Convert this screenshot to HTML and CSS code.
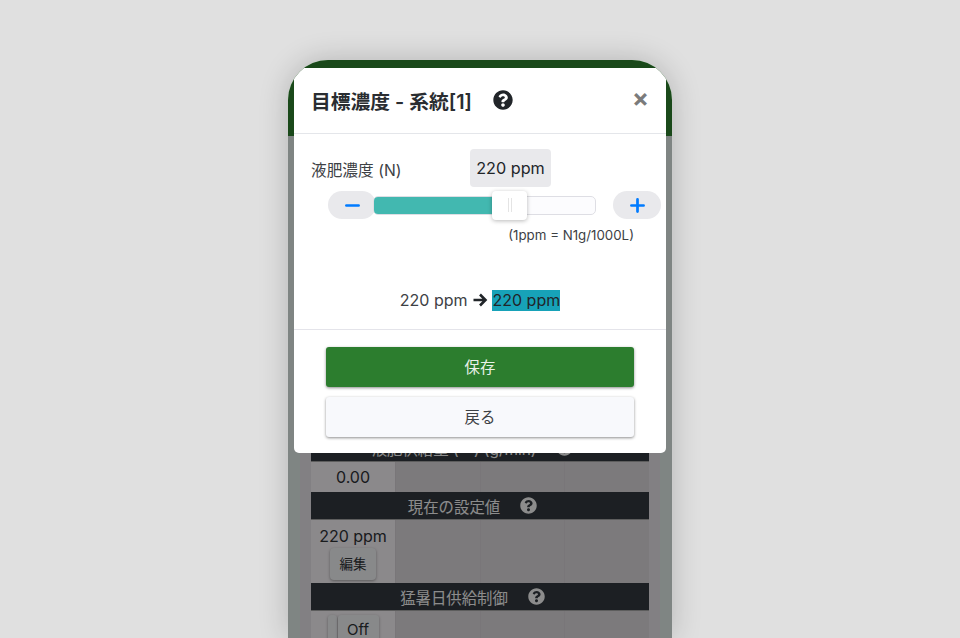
FILE: index.html
```html
<!DOCTYPE html>
<html lang="ja">
<head>
<meta charset="utf-8">
<title>目標濃度</title>
<link rel="stylesheet" href="styles.css">
</head>
<body>
<div class="phone">
  <header class="appbar"></header>
  <main class="content">
    <div class="table">
      <div class="band">液肥供給量 (ー) (g/min)<svg class="help" viewBox="0 0 512 512"><use href="#q"/></svg></div>
      <div class="row row-short"><div class="cell first">0.00</div><div class="cell"></div><div class="cell"></div><div class="cell"></div></div>
      <div class="band">現在の設定値<svg class="help" viewBox="0 0 512 512"><use href="#q"/></svg></div>
      <div class="row row-tall"><div class="cell first">220 ppm<span class="edit">編集</span></div><div class="cell"></div><div class="cell"></div><div class="cell"></div></div>
      <div class="band">猛暑日供給制御<svg class="help" viewBox="0 0 512 512"><use href="#q"/></svg></div>
      <div class="row"><div class="cell first"><span class="toggle"><i></i><b>Off</b></span></div><div class="cell"></div><div class="cell"></div><div class="cell"></div></div>
    </div>
  </main>
  <div class="scrim"></div>
  <section class="modal">
    <div class="modal-head">
      <h1>目標濃度 - 系統[1]</h1>
      <svg class="head-help" viewBox="0 0 512 512"><path id="q" fill="currentColor" d="M504 256c0 137-111 248-248 248S8 393 8 256 119 8 256 8s248 111 248 248zM262.700 90c-54.500 0-89.300 23-116.500 63.800-3.500 5.300-2.400 12.400 2.700 16.300l34.700 26.300c5.200 3.900 12.600 3 16.700-2.100 17.900-22.700 30.100-35.800 57.300-35.800 20.400 0 45.700 13.100 45.700 33 0 15-12.400 22.700-32.600 34-23.600 13.200-54.800 29.700-54.800 70.900V300c0 6.600 5.400 12 12 12h56c6.600 0 12-5.400 12-12v-1.300c0-28.600 83.500-29.800 83.500-107.200C378.400 133.200 317.900 90 262.700 90zM256 339c-25.500 0-46.200 20.700-46.200 46.200 0 25.500 20.700 46.200 46.200 46.200s46.200-20.700 46.200-46.200c0-25.500-20.700-46.200-46.200-46.200z"/></svg>
      <span class="close">×</span>
    </div>
    <div class="modal-body">
      <div class="label-row">
        <span class="label">液肥濃度 (N)</span>
        <span class="bubble">220 ppm</span>
      </div>
      <div class="slider-row">
        <span class="step"><svg viewBox="0 0 16 16"><path d="M1.500 8h13"/></svg></span>
        <div class="track">
          <div class="fill"></div>
          <div class="thumb"><i></i><i></i></div>
        </div>
        <span class="step step-plus"><svg viewBox="0 0 16 16"><path d="M1.500 8h13M8 1.500v13"/></svg></span>
      </div>
      <p class="note">(1ppm = N1g/1000L)</p>
      <p class="change">220 ppm <svg class="arrow" viewBox="0 0 16 14"><path d="M1.500 7h12M8 1.500 13.500 7 8 12.500"/></svg> <mark>220 ppm</mark></p>
    </div>
    <div class="modal-foot">
      <button class="btn btn-save">保存</button>
      <button class="btn btn-back">戻る</button>
    </div>
  </section>
</div>
</body>
</html>
```
FILE: styles.css
```css
* { box-sizing: border-box; }
html, body { height: 100%; }
body {
  margin: 0;
  background: #e0e0e0;
  display: flex;
  justify-content: center;
  padding-top: 60px;
  overflow: hidden;
  font-family: Inter, "Noto Sans CJK JP", sans-serif;
  color: #212529;
}
.phone {
  position: relative;
  width: 384px;
  height: 578px;
  flex: none;
  border-radius: 40px 40px 0 0;
  overflow: hidden;
  background: #fff;
  box-shadow: 0 0 30px rgba(0,0,0,.2);
}
.appbar { height: 76px; background: #308630; }
.content { padding: 0 12px; height: 502px; background: #e7f2ee; }
.table {
  height: 100%;
  padding: 298px 11px 0;
  background: #ede9ee;
}
.band {
  height: 28px;
  background: #343a40;
  border-bottom: 1px solid #aaa;
  color: #fff;
  display: flex;
  align-items: center;
  justify-content: center;
  gap: 20px;
  padding-right: 15px;
  font-size: 15.4px;
}
.help { width: 17px; height: 17px; flex: none; }
.row { display: grid; grid-template-columns: 84px 85px 84px 85px; }
.row-short { height: 30px; }
.row-tall { height: 63px; }
.cell { background: #e2dee2; border-left: 1px solid #dcd8dc; height: 100%; }
.first {
  border-left: 0;
  background: #fdf9fd;
  display: flex;
  flex-direction: column;
  align-items: center;
  padding-top: 5px;
  font-size: 16px;
  line-height: 20px;
  color: #303338;
}
.row-tall .first { padding-top: 6px; }
.edit {
  margin-top: 2px;
  width: 46px;
  height: 32px;
  background: #f8f9fc;
  border-radius: 4px;
  box-shadow: 0 1px 3px rgba(0,0,0,.35);
  font-size: 13.5px;
  line-height: 32px;
  text-align: center;
}
.toggle { display: flex; gap: 1px; height: 32px; margin-top: -1px; }
.toggle i { width: 9px; background: #f8f9fc; border-radius: 3px; box-shadow: 0 1px 3px rgba(0,0,0,.35); }
.toggle b { width: 41px; font-weight: 400; font-size: 15px; background: #f8f9fc; border-radius: 3px; line-height: 30px; text-align: center; box-shadow: 0 1px 3px rgba(0,0,0,.35); }
.scrim { position: absolute; inset: 0; background: rgba(0,0,0,.45); }
.modal {
  position: absolute;
  left: 6px;
  top: 8px;
  width: 372px;
  height: 385px;
  background: #fff;
  border-radius: 5px;
  display: flex;
  flex-direction: column;
}
.modal-head {
  height: 66px;
  flex: none;
  display: flex;
  align-items: center;
  padding: 0 17px;
  border-bottom: 1px solid #e4e6ea;
}
h1 { margin: 0; font-size: 19.8px; font-weight: 600; color: #2a2d31; }
.head-help { width: 20px; height: 20px; margin-left: 21px; margin-top: -1px; color: #212529; }
.close { margin-left: auto; margin-top: -5px; font-size: 25px; font-weight: 700; color: #7b7b7b; line-height: 1; }
.modal-body { height: 196px; flex: none; padding: 15px 4px 0 17px; border-bottom: 1px solid #e4e4ea; }
.label-row { display: flex; height: 37px; }
.label { font-size: 15.7px; line-height: 44px; width: 159px; color: #3d4145; }
.bubble {
  width: 81px; height: 38px; background: #e9e9ec; border-radius: 4px;
  font-size: 16.2px; line-height: 38px; text-align: center; color: #212529;
}
.slider-row { display: flex; align-items: center; height: 28px; margin: 5px 0 0 17px; }
.step {
  width: 48px; height: 28px; background: #e9e9ec; border-radius: 14px; flex: none;
  display: flex; align-items: center; justify-content: center;
}
.step svg { width: 15px; height: 15px; fill: none; stroke: #007bff; stroke-width: 2.900; stroke-linecap: round; }
.step-plus { margin-left: 17px; }
.track {
  position: relative;
  flex: none;
  width: 223px;
  height: 19px;
  margin-left: -3px;
  background: #fcfcfe;
  border: 1px solid #dedee4;
  border-radius: 5px;
}
.fill { width: 121px; height: 100%; background: #42b8b0; border-radius: 4px 0 0 4px; }
.thumb {
  position: absolute;
  left: 118px; top: -6px;
  width: 35px; height: 29px;
  background: #fff;
  border-radius: 4px;
  box-shadow: 0 1px 4px rgba(0,0,0,.28);
  display: flex; align-items: center; justify-content: center; gap: 2px;
}
.thumb i { width: 1px; height: 14px; background: #e4e4e4; }
.note { margin: 8px 28px 0 0; text-align: right; font-size: 13.3px; line-height: 16px; color: #3d4145; }
.change { margin: 47px 0 0 -13px; text-align: center; font-size: 16px; line-height: 21px; color: #3d4145; }
.arrow { width: 16px; height: 14px; vertical-align: -1px; fill: none; stroke: #212529; stroke-width: 2.600; }
mark { background: #17a2b8; color: #212529; padding: 0 0 0 1px; margin-left: -1px; display: inline-block; }
.modal-foot { padding: 17px 32px 0; display: flex; flex-direction: column; gap: 10px; }
.btn {
  height: 40px; border: 0; border-radius: 3px; font: inherit; font-size: 15.4px; padding-bottom: 3px;
  box-shadow: 0 1px 3px rgba(0,0,0,.45);
}
.btn-save { background: #2c7d2e; color: #e8f1e8; }
.btn-back { background: #f8f9fc; color: #3d4145; }
```
